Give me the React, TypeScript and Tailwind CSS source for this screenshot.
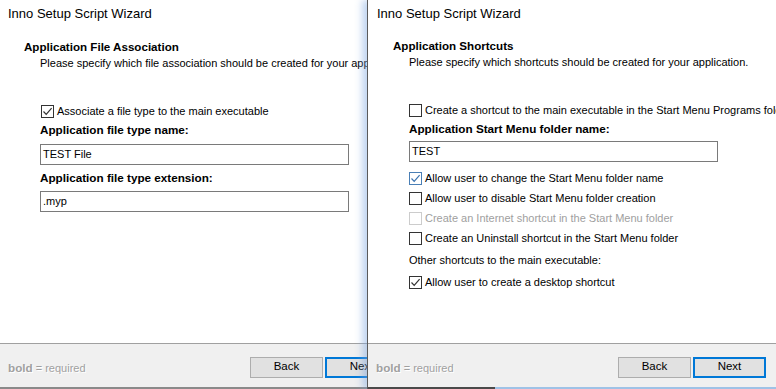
import React from "react";

const font = { fontFamily: '"Liberation Sans", Arial, sans-serif' };

function Check({ checked, disabled, focus }: { checked?: boolean; disabled?: boolean; focus?: boolean }) {
  const border = disabled ? "border-[#cccccc]" : focus ? "border-[#4a7fb5]" : "border-[#333333]";
  const stroke = focus ? "#3a73b0" : "#333333";
  return (
    <div className={`w-[13px] h-[13px] border ${border} bg-white shrink-0 flex items-center justify-center`}>
      {checked && (
        <svg width="11" height="11" viewBox="0 0 11 11">
          <path d="M1.5 5.5 L4.2 8.3 L9.6 2.2" fill="none" stroke={stroke} strokeWidth="1.2" />
        </svg>
      )}
    </div>
  );
}

function CheckRow({ label, checked, disabled, focus, h }: { label: string; checked?: boolean; disabled?: boolean; focus?: boolean; h: string }) {
  return (
    <div className={`flex items-center ${h} whitespace-nowrap`}>
      <Check checked={checked} disabled={disabled} focus={focus} />
      <span className={`ml-[3px] text-[11px] ${disabled ? "text-[#a0a0a0]" : "text-black"}`}>{label}</span>
    </div>
  );
}

function Field({ value, w }: { value: string; w: string }) {
  return (
    <div className={`${w} h-[21px] shrink-0 border border-[#7a7a7a] bg-white flex items-center pl-[2px] text-[11px] text-black`}>
      {value}
    </div>
  );
}

function Footer() {
  return (
    <div className="h-[44px] shrink-0 border-t border-[#a0a0a0] bg-[#f0f0f0] flex items-center pl-2 pr-[10px] pt-[3px]">
      <div className="text-[11px] text-[#a0a0a0] whitespace-nowrap [text-shadow:1px_1px_0_#ffffff] pt-[2px]">
        <span className="font-bold text-[11.7px]">bold</span> = required
      </div>
      <div className="flex-1" />
      <div className="flex gap-[2px] shrink-0">
        <div className="w-[73px] h-[21px] bg-[#e1e1e1] border border-[#adadad] flex items-center justify-center text-[11.5px] text-black">Back</div>
        <div className="w-[73px] h-[21px] bg-[#e1e1e1] border-2 border-[#0078d7] flex items-center justify-center text-[11.5px] text-black">Next</div>
      </div>
    </div>
  );
}

function Title() {
  return (
    <div className="h-[28px] flex items-center pl-2 text-[13px] text-black whitespace-nowrap">Inno Setup Script Wizard</div>
  );
}

export default function App() {
  return (
    <div className="w-[776px] h-[389px] overflow-hidden flex bg-white" style={font}>
      {/* Left window */}
      <div className="w-[367px] h-[389px] overflow-hidden shrink-0">
        <div className="w-[408px] h-[389px] flex flex-col bg-white">
          <Title />
          <div className="flex-1 flex flex-col">
            <div className="pl-6 pt-[11px] text-[11.6px] font-bold text-black leading-[16px] whitespace-nowrap">Application File Association</div>
            <div className="pl-10 text-[11px] text-black leading-[16px] whitespace-nowrap">Please specify which file association should be created for your application.</div>
            <div className="pl-[41px] pt-[34px]">
              <CheckRow label="Associate a file type to the main executable" checked h="h-[13px]" />
            </div>
            <div className="pl-10 pb-[2px] h-[26px] flex items-center text-[11.7px] font-bold text-black whitespace-nowrap">Application file type name:</div>
            <div className="pl-10"><Field value="TEST File" w="w-[309px]" /></div>
            <div className="pl-10 h-[26px] flex items-center text-[11.7px] font-bold text-black whitespace-nowrap">Application file type extension:</div>
            <div className="pl-10"><Field value=".myp" w="w-[309px]" /></div>
          </div>
          <Footer />
          <div className="h-[2px] bg-[#8a8a8a]" />
        </div>
      </div>
      {/* Right window */}
      <div className="relative z-10 w-[409px] h-[389px] shrink-0 border-l border-[#5a5a5a] bg-white flex flex-col shadow-[-5px_0_7px_rgba(120,165,225,0.45)]">
        <div className="flex-1 flex flex-col pl-px">
          <Title />
          <div className="pl-6 pt-[10px] text-[11.6px] font-bold text-black leading-[16px] whitespace-nowrap">Application Shortcuts</div>
          <div className="pl-10 text-[11px] text-black leading-[16px] whitespace-nowrap">Please specify which shortcuts should be created for your application.</div>
          <div className="pl-10 pt-[34px]">
            <CheckRow label="Create a shortcut to the main executable in the Start Menu Programs folder" h="h-[13px]" />
          </div>
          <div className="pl-10 pb-[1px] h-[24px] flex items-center text-[11.7px] font-bold text-black whitespace-nowrap">Application Start Menu folder name:</div>
          <div className="pl-10"><Field value="TEST" w="w-[309px]" /></div>
          <div className="pl-10 pt-[6px] flex flex-col">
            <CheckRow label="Allow user to change the Start Menu folder name" checked focus h="h-[20px]" />
            <CheckRow label="Allow user to disable Start Menu folder creation" h="h-[20px]" />
            <CheckRow label="Create an Internet shortcut in the Start Menu folder" disabled h="h-[20px]" />
            <CheckRow label="Create an Uninstall shortcut in the Start Menu folder" h="h-[21px]" />
            <div className="h-[23px] flex items-center text-[11px] text-black whitespace-nowrap">Other shortcuts to the main executable:</div>
            <CheckRow label="Allow user to create a desktop shortcut" checked h="h-[20px]" />
          </div>
        </div>
        <Footer />
        <div className="h-[2px] flex">
          <div className="w-[127px] bg-[#4a4a4a]" />
          <div className="flex-1 bg-[#9fc2e6]" />
        </div>
      </div>
    </div>
  );
}
